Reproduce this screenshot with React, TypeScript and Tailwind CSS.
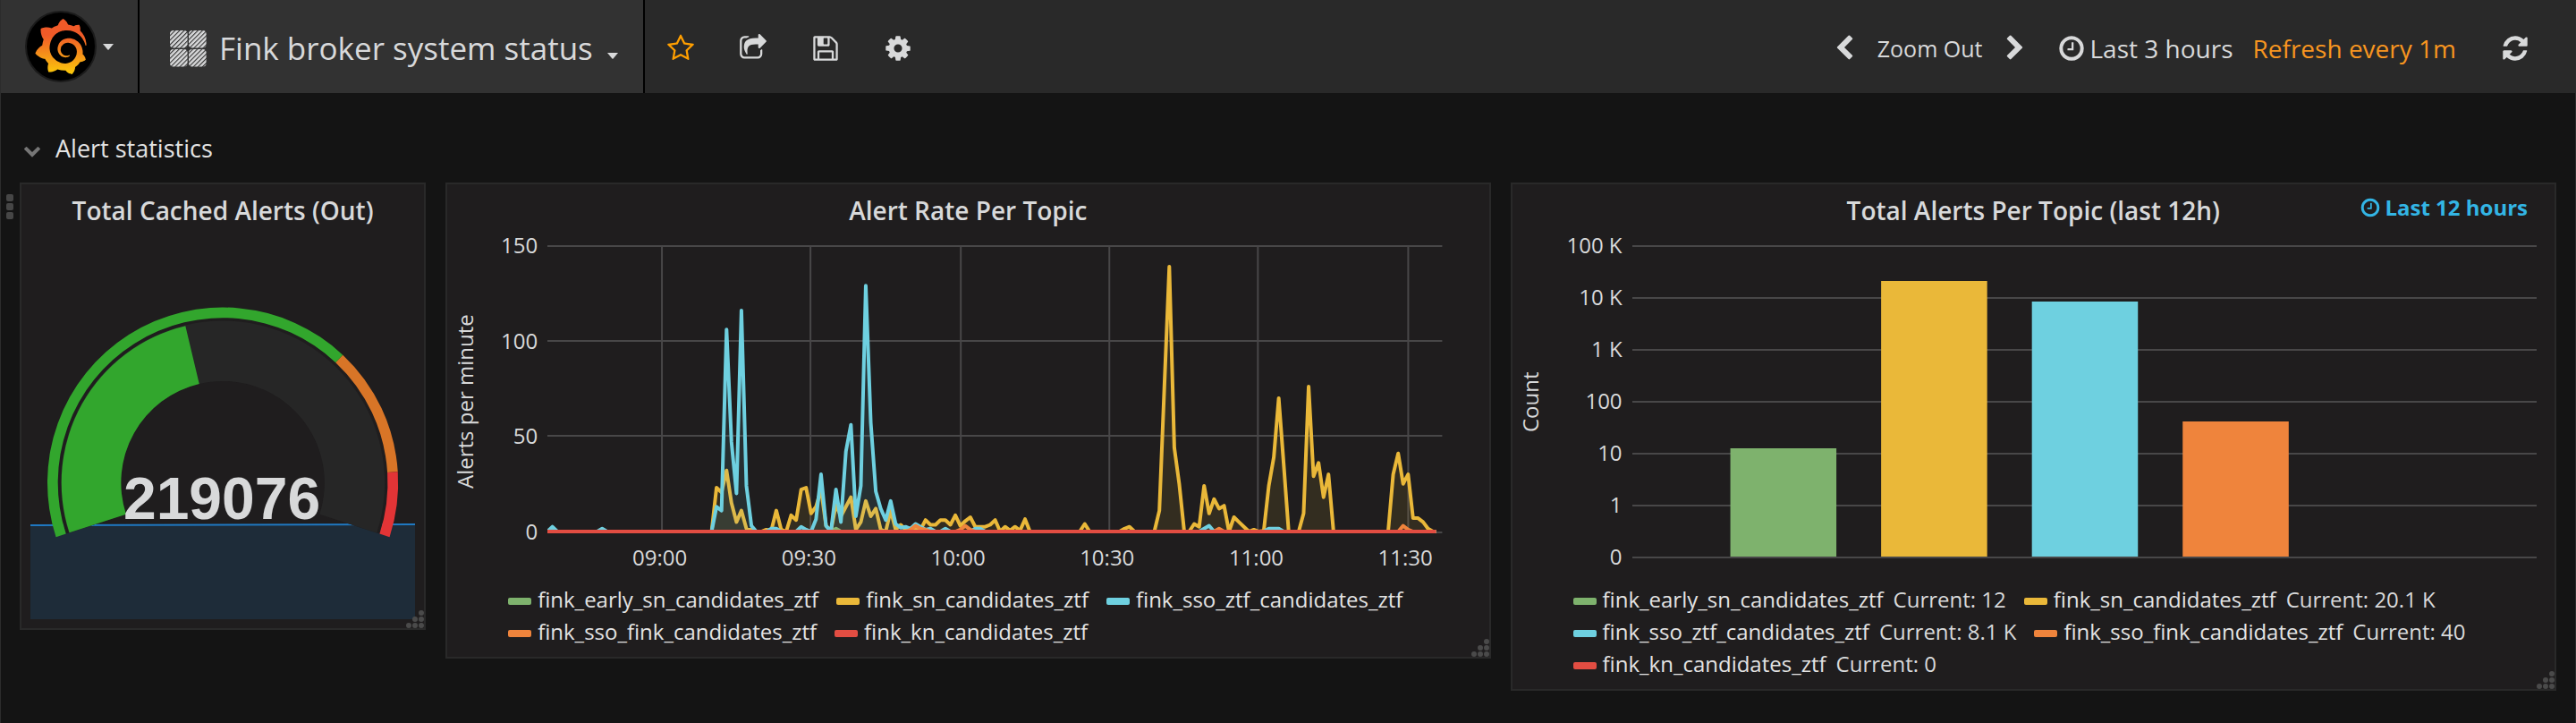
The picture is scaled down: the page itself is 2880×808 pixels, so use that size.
import React from 'react';
import { SiGrafana } from 'react-icons/si';

const COLORS = {
  green: '#7eb26d',
  yellow: '#eab839',
  blue: '#6ed0e0',
  orange: '#ef843c',
  red: '#e24d42',
};

const GLYPHS = {
  star: 'M1201 1004l306-297-422-62-189-382-189 382-422 62 306 297-73 421 378-199 377 199zm527-357q0 22-26 48l-363 354 86 500q1 7 1 20 0 50-41 50-19 0-40-12l-449-236-449 236q-22 12-40 12-21 0-31.5-14.5t-10.5-35.5q0-6 2-20l86-500-364-354q-25-27-25-48 0-37 56-46l502-73 225-455q19-41 49-41t49 41l225 455 502 73q56 9 56 46z',
  share: 'M1472 989v259q0 119-84.5 203.5t-203.5 84.5h-832q-119 0-203.5-84.5t-84.5-203.5v-832q0-119 84.5-203.5t203.5-84.5h255q13 0 22.5 9.5t9.5 22.5q0 27-26 32-77 26-133 60-10 4-16 4h-112q-66 0-113 47t-47 113v832q0 66 47 113t113 47h832q66 0 113-47t47-113v-214q0-19 18-29 28-13 54-37 16-16 35-8 21 9 21 29zm237-496l-384 384q-18 19-45 19-12 0-25-5-39-17-39-59v-192h-160q-323 0-438 131-119 137-74 473 3 23-20 34-8 2-12 2-16 0-26-13-10-14-21-31t-39.5-68.5-49.5-99.5-38.5-114-17.5-122q0-49 3.5-91t14-90 28-88 47-81.5 68.5-74 94.5-61.5 124.5-48.5 159.5-30.5 196.5-11h160v-192q0-42 39-59 13-5 25-5 26 0 45 19l384 384q19 19 19 45t-19 45z',
  save: 'M512 1536h768v-384h-768v384zm896 0h128v-896q0-14-10-38.5t-20-34.5l-281-281q-10-10-34-20t-39-10v416q0 40-28 68t-68 28h-576q-40 0-68-28t-28-68v-416h-128v1280h128v-416q0-40 28-68t68-28h832q40 0 68 28t28 68v416zm-384-928v-320q0-13-9.5-22.5t-22.5-9.5h-192q-13 0-22.5 9.5t-9.5 22.5v320q0 13 9.5 22.5t22.5 9.5h192q13 0 22.5-9.5t9.5-22.5zm640 32v928q0 40-28 68t-68 28h-1344q-40 0-68-28t-28-68v-1344q0-40 28-68t68-28h928q40 0 88 20t76 48l280 280q28 28 48 76t20 88z',
  cog: 'M1152 896q0-106-75-181t-181-75-181 75-75 181 75 181 181 75 181-75 75-181zm512-109v222q0 12-8 23t-20 13l-185 28q-19 54-39 91 35 50 107 138 10 12 10 25t-9 23q-27 37-99 108t-94 71q-12 0-26-9l-138-108q-44 23-91 38-16 136-29 186-7 28-36 28h-222q-14 0-24.5-8.5t-11.5-21.5l-28-184q-49-16-90-37l-141 107q-10 9-25 9-14 0-25-11-126-114-165-168-7-10-7-23 0-12 8-23 15-21 51-66.5t54-70.5q-27-50-41-99l-183-27q-13-2-21-12.5t-8-23.5v-222q0-12 8-23t19-13l186-28q14-46 39-92-40-57-107-138-10-12-10-24 0-10 9-23 26-36 98.5-107.5t94.5-71.5q13 0 26 10l138 107q44-23 91-38 16-136 29-186 7-28 36-28h222q14 0 24.5 8.5t11.5 21.5l28 184q49 16 90 37l142-107q9-9 24-9 13 0 25 10 129 119 165 170 7 8 7 22 0 12-8 23-15 21-51 66.5t-54 70.5q26 50 41 98l183 28q13 2 21 12.5t8 23.5z',
  clock: 'M1024 544v448q0 14-9 23t-23 9h-320q-14 0-23-9t-9-23v-64q0-14 9-23t23-9h224v-352q0-14 9-23t23-9h64q14 0 23 9t9 23zm416 352q0-148-73-273t-198-198-273-73-273 73-198 198-73 273 73 273 198 198 273 73 273-73 198-198 73-273zm224 0q0 209-103 385.5t-279.5 279.5-385.5 103-385.5-103-279.5-279.5-103-385.5 103-385.5 279.5-279.5 385.5-103 385.5 103 279.5 279.5 103 385.5z',
  refresh: 'M1639 1056q0 5-1 7-64 268-268 434.5t-478 166.5q-146 0-282.5-55t-243.5-157l-129 129q-19 19-45 19t-45-19-19-45v-448q0-26 19-45t45-19h448q26 0 45 19t19 45-19 45l-137 137q71 66 161 102t187 36q134 0 250-65t186-179q11-17 53-117 8-23 30-23h192q13 0 22.5 9.5t9.5 22.5zm25-800v448q0 26-19 45t-45 19h-448q-26 0-45-19t-19-45 19-45l138-138q-148-137-349-137-134 0-250 65t-186 179q-11 17-53 117-8 23-30 23h-199q-13 0-22.5-9.5t-9.5-22.5v-7q65-268 270-434.5t480-166.5q146 0 284 55.5t245 156.5l130-129q19-19 45-19t45 19 19 45z',
  left: 'M1427 301l-531 531 531 531q19 19 19 45t-19 45l-166 166q-19 19-45 19t-45-19l-742-742q-19-19-19-45t19-45l742-742q19-19 45-19t45 19l166 166q19 19 19 45t-19 45z',
  right: 'M365 301l531 531-531 531q-19 19-19 45t19 45l166 166q19 19 45 19t45-19l742-742q19-19 19-45t-19-45l-742-742q-19-19-45-19t-45 19l-166 166q-19 19-19 45t19 45z',
  down: 'M1683 808l-742 741q-19 19-45 19t-45-19l-742-741q-19-19-19-45.5t19-45.5l166-165q19-19 45-19t45 19l531 531 531-531q19-19 45-19t45 19l166 165q19 19 19 45.5t-19 45.5z',
};

function Glyph({ name, className }: { name: keyof typeof GLYPHS; className: string }) {
  return (
    <svg viewBox="0 0 1792 1792" fill="currentColor" aria-hidden="true" className={`shrink-0 ${className}`}>
      <path d={GLYPHS[name]} />
    </svg>
  );
}

function Caret() {
  return (
    <svg viewBox="0 0 12 7" fill="currentColor" aria-hidden="true" className="h-[7px] w-3 shrink-0">
      <path d="M0 0h12L6.6 6.6a.9.9 0 0 1-1.2 0z" />
    </svg>
  );
}

function DashboardIcon() {
  const tiles = [
    [0, 0],
    [21, 0],
    [0, 21],
    [21, 21],
  ];
  return (
    <svg viewBox="0 0 41 41" aria-hidden="true" className="size-[41px] shrink-0">
      <defs>
        <pattern id="hatch" width="3.6" height="3.6" patternUnits="userSpaceOnUse" patternTransform="rotate(45)">
          <rect width="3.6" height="3.6" fill="#d8d9da" />
          <rect width="1.1" height="3.6" fill="#323232" />
        </pattern>
      </defs>
      {tiles.map(([x, y]) => (
        <rect key={`${x}-${y}`} x={x} y={y} width="19.6" height="19.6" rx="4" fill="url(#hatch)" />
      ))}
    </svg>
  );
}

function Navbar() {
  return (
    <header className="flex h-[104px] items-stretch bg-[#292929] text-[#d8d9da]">
      <button type="button" aria-label="Main menu" className="flex w-[155px] items-center gap-[7px] border-r-2 border-black bg-[#323232] pl-[27px]">
        <span className="flex size-20 items-center justify-center rounded-full border-2 border-[#1b1b1b] bg-black">
          <svg width="0" height="0" aria-hidden="true" className="absolute">
            <defs>
              <linearGradient id="flame" x1="0" y1="0" x2="0" y2="1">
                <stop offset="0.3" stopColor="#f05a28" />
                <stop offset="1" stopColor="#fbca0a" />
              </linearGradient>
            </defs>
          </svg>
          <SiGrafana size={62} fill="url(#flame)" />
        </span>
        <Caret />
      </button>
      <button type="button" className="flex items-center border-r-2 border-black bg-[#323232] pt-1 pr-7 pl-[34px]">
        <DashboardIcon />
        <span className="ml-[14px] text-[35px] leading-10">Fink broker system status</span>
        <span className="mt-4 ml-4">
          <Caret />
        </span>
      </button>
      <nav aria-label="Dashboard actions" className="flex pt-[3px]">
        <button type="button" aria-label="Mark as favourite" className="flex w-[81px] items-center justify-center text-[#ff9f00]">
          <Glyph name="star" className="size-8" />
        </button>
        <button type="button" aria-label="Share dashboard" className="flex w-[81px] items-center justify-center">
          <Glyph name="share" className="size-8" />
        </button>
        <button type="button" aria-label="Save dashboard" className="flex w-[81px] items-center justify-center">
          <Glyph name="save" className="size-8" />
        </button>
        <button type="button" aria-label="Settings" className="flex w-[81px] items-center justify-center">
          <Glyph name="cog" className="size-8" />
        </button>
      </nav>
      <div className="ml-auto flex items-center pt-1 pr-[51px]">
        <button type="button" aria-label="Shift time back">
          <Glyph name="left" className="size-[30px]" />
        </button>
        <button type="button" className="mx-[22px] text-[25px] leading-9">Zoom Out</button>
        <button type="button" aria-label="Shift time forward">
          <Glyph name="right" className="size-[30px]" />
        </button>
        <button type="button" className="ml-8 flex items-center gap-1 text-[28px] leading-9">
          <Glyph name="clock" className="size-8" />
          Last 3 hours
        </button>
        <button type="button" className="ml-[22px] text-[28px] leading-9 text-[#f79520]">Refresh every 1m</button>
        <button type="button" aria-label="Refresh" className="ml-[50px]">
          <Glyph name="refresh" className="size-8" />
        </button>
      </div>
    </header>
  );
}

function ResizeHandle() {
  const dots = [
    [17, 3],
    [10, 10],
    [17, 10],
    [3, 17],
    [10, 17],
    [17, 17],
  ];
  return (
    <svg viewBox="0 0 20 20" fill="#4a4a4a" aria-hidden="true" className="absolute right-0 bottom-0 size-5">
      {dots.map(([x, y]) => (
        <circle key={`${x}-${y}`} cx={x} cy={y} r="3" />
      ))}
    </svg>
  );
}

function Panel({ title, badge, children }: { title: string; badge?: string; children: React.ReactNode }) {
  return (
    <section className="relative border-2 border-[#292929] bg-[#1f1d1e]">
      <h2 className="flex h-14 items-center justify-center pt-[2px] text-[28px] font-semibold">{title}</h2>
      {badge && (
        <span className="absolute top-[10px] right-[30px] flex items-center gap-1 text-2xl font-bold text-[#33b5e5]">
          <Glyph name="clock" className="size-6" />
          {badge}
        </span>
      )}
      {children}
      <ResizeHandle />
    </section>
  );
}

function polar(radius: number, degrees: number) {
  const a = (degrees * Math.PI) / 180;
  return `${(215 - radius * Math.cos(a)).toFixed(2)} ${(277.5 - radius * Math.sin(a)).toFixed(2)}`;
}

const SWEEP = 216;

function ring(outer: number, inner: number, from: number, to: number) {
  const a = from * SWEEP - 18;
  const b = to * SWEEP - 18;
  const large = b - a > 180 ? 1 : 0;
  return `M${polar(outer, a)}A${outer} ${outer} 0 ${large} 1 ${polar(outer, b)}L${polar(inner, b)}A${inner} ${inner} 0 ${large} 0 ${polar(inner, a)}Z`;
}

function Gauge() {
  return (
    <svg viewBox="0 0 430 430" role="img" aria-label="Gauge at 219076" className="block w-full">
      <path d="M0 325L430 324V430H0Z" fill="#1e2c39" />
      <path d="M0 325L430 324" stroke="#1f78c1" strokeWidth="2" />
      <path d={ring(184.3, 113.7, 0, 1)} fill="#1f1d1e" />
      <path d={ring(181, 113.7, 0, 1)} fill="#262626" />
      <path d={ring(180.3, 113.7, 0, 0.438)} fill="#32a62d" />
      <path d={ring(196, 184.3, 0, 0.7)} fill="#32a62d" />
      <path d={ring(196, 184.3, 0.7, 0.9)} fill="#d87527" />
      <path d={ring(196, 184.3, 0.9, 1)} fill="#e23436" />
      <text x="214" y="318" textAnchor="middle" fill="#d8d9da" className="font-['Liberation_Sans',sans-serif] text-[66px] font-bold">
        219076
      </text>
    </svg>
  );
}

type Runs = [number, number[]][];

const MINUTES = 180;

function expand(runs: Runs) {
  const values = new Array<number>(MINUTES).fill(0);
  runs.forEach(([start, run]) => run.forEach((v, i) => (values[start + i] = v)));
  return values;
}

const SERIES = [
  { color: COLORS.green, values: expand([[58, [1.5]]]) },
  {
    color: COLORS.yellow,
    values: expand([
      [34, [23, 20.5, 32, 15, 5, 11, 1.5, 1]],
      [44, [1, 0.5, 11, 1, 0, 8.5, 6, 22, 23, 9.5, 13, 22, 3, 0.5, 14, 8, 13, 18, 1, 5, 16, 8, 12, 1, 0, 11, 1, 3.5, 1, 1.5, 1, 1, 6, 3.5, 3.5, 6, 6, 3.5, 8.5, 3, 5.5, 7.5, 2.5, 2.5, 2.5, 3.5, 6, 0, 2.5, 0.5, 2.5, 0.5, 6.5]],
      [108, [4]],
      [116, [1.5, 2.5]],
      [123, [11, 75, 139, 44, 25, 0, 0, 4, 2.5, 24, 9.5, 17, 12, 13.5, 0, 7.5, 5, 2.5, 0, 1, 0, 0.5, 24, 39, 70, 35, 0, 0, 0, 9.5, 76, 29, 36, 18, 30]],
      [170, [30, 41, 25, 30, 7, 7, 5, 1.5]],
    ]),
  },
  {
    color: COLORS.blue,
    values: expand([
      [1, [2.5]],
      [11, [1.5]],
      [34, [13, 11, 106, 47, 20, 116, 24, 3]],
      [45, [1.5, 1.5]],
      [51, [2.5, 1, 0, 6.5, 30, 3, 0, 22, 5, 42, 56, 8, 24, 129, 57, 21, 12, 6, 16, 4, 2, 2.5, 1.5, 4, 2.5, 1, 1.5]],
      [80, [1.5]],
      [86, [1.5, 1.5]],
      [132, [1.5, 3]],
      [145, [1.5, 1.5, 1.5]],
    ]),
  },
  {
    color: COLORS.orange,
    values: expand([
      [73, [1, 3, 1.5, 1]],
      [83, [1, 3, 1]],
      [135, [1.5]],
      [172, [3, 1]],
    ]),
  },
  { color: COLORS.red, values: expand([]) },
];

function line(values: number[]) {
  return values.map((v, i) => `${i ? 'L' : 'M'}${Math.min(i * 5.56, 993).toFixed(1)} ${(321 - v * 2.13).toFixed(1)}`).join('');
}

function RatePlot() {
  return (
    <svg viewBox="0 0 1000 324" preserveAspectRatio="none" role="img" aria-label="Alerts per minute by topic" className="mt-[11px] block h-[324px] w-full">
      <g stroke="#484748" strokeWidth="2" fill="none">
        {[2, 108, 214, 322].map((y) => (
          <path key={y} d={`M0 ${y}H1000`} />
        ))}
        {[128, 294, 462, 628, 794, 962].map((x) => (
          <path key={x} d={`M${x} 1V322`} />
        ))}
      </g>
      {SERIES.map((s) => (
        <g key={s.color}>
          <path d={`${line(s.values)}V321H0Z`} fill={s.color} fillOpacity="0.1" />
          <path d={line(s.values)} fill="none" stroke={s.color} strokeWidth="4" strokeLinejoin="round" vectorEffect="non-scaling-stroke" />
        </g>
      ))}
    </svg>
  );
}

const BARS = [
  { x: 109.5, y: 228, color: COLORS.green },
  { x: 278, y: 41, color: COLORS.yellow },
  { x: 446.5, y: 64, color: COLORS.blue },
  { x: 615, y: 198, color: COLORS.orange },
];

function CountPlot() {
  return (
    <svg viewBox="0 0 1011 352" preserveAspectRatio="none" role="img" aria-label="Total alerts by topic" className="mt-[11px] block h-[352px] w-full">
      {[2, 60, 118, 176, 234, 292, 350].map((y) => (
        <path key={y} d={`M0 ${y}H1011`} stroke="#484748" strokeWidth="2" />
      ))}
      {BARS.map((b) => (
        <rect key={b.color} x={b.x} y={b.y} width="118.5" height={349 - b.y} fill={b.color} />
      ))}
    </svg>
  );
}

function AxisTitle({ children }: { children: string }) {
  return <div className="flex w-6 shrink-0 rotate-180 items-center justify-center text-2xl leading-6 [writing-mode:vertical-rl]">{children}</div>;
}

function Ticks({ labels, className }: { labels: string[]; className: string }) {
  return (
    <div className={`mr-[11px] flex shrink-0 flex-col justify-between text-right text-2xl leading-6 ${className}`}>
      {labels.map((label) => (
        <span key={label}>{label}</span>
      ))}
    </div>
  );
}

interface LegendItem {
  name: string;
  color: string;
  current?: string;
}

function Legend({ items }: { items: LegendItem[] }) {
  return (
    <ul className="flex flex-wrap gap-x-5 pt-4 pr-5 pb-[10px] pl-[68px] text-2xl leading-9">
      {items.map((item) => (
        <li key={item.name} className="flex items-center gap-[7px]">
          <svg viewBox="0 0 26 8" aria-hidden="true" className="mt-1 h-2 w-[26px]">
            <rect width="26" height="8" rx="2" fill={item.color} />
          </svg>
          <span className="text-[#e3e3e3]">{item.name}</span>
          {item.current && <span className="ml-1">Current: {item.current}</span>}
        </li>
      ))}
    </ul>
  );
}

const RATE_LEGEND: LegendItem[] = [
  { name: 'fink_early_sn_candidates_ztf', color: COLORS.green },
  { name: 'fink_sn_candidates_ztf', color: COLORS.yellow },
  { name: 'fink_sso_ztf_candidates_ztf', color: COLORS.blue },
  { name: 'fink_sso_fink_candidates_ztf', color: COLORS.orange },
  { name: 'fink_kn_candidates_ztf', color: COLORS.red },
];

const CURRENT = ['12', '20.1 K', '8.1 K', '40', '0'];
const COUNT_LEGEND = RATE_LEGEND.map((item, i) => ({ ...item, current: CURRENT[i] }));

export default function App() {
  return (
    <div className="min-h-screen border-x border-[#2c2c2c] bg-[#141414] font-['Open_Sans',sans-serif] text-[#d8d9da]">
      <Navbar />
      <main className="px-[21px] pt-11 pb-9">
        <button type="button" className="flex items-center gap-4 pl-1 text-[27px] leading-9 text-[#e3e3e3]">
          <Glyph name="down" className="mt-1 size-5 text-[#767676]" />
          Alert statistics
        </button>
        <div className="relative mt-5 grid grid-cols-[454fr_1168fr_1169fr] items-start gap-[22px]">
          <div aria-hidden="true" className="absolute top-[13px] -left-[15px] flex flex-col gap-[2px]">
            <span className="size-2 rounded-xs bg-[#464646]" />
            <span className="size-2 rounded-xs bg-[#464646]" />
            <span className="size-2 rounded-xs bg-[#464646]" />
          </div>
          <Panel title="Total Cached Alerts (Out)">
            <div className="px-[10px] pb-[10px]">
              <Gauge />
            </div>
          </Panel>
          <Panel title="Alert Rate Per Topic">
            <div className="flex min-h-[374px] pr-[52px] pl-2">
              <AxisTitle>Alerts per minute</AxisTitle>
              <Ticks labels={['150', '100', '50', '0']} className="h-[344px] w-[69px]" />
              <div className="min-w-0 flex-1">
                <RatePlot />
                <div className="mt-[14px] flex text-center text-2xl leading-6">
                  <span className="w-[4.2%] shrink-0" />
                  {['09:00', '09:30', '10:00', '10:30', '11:00', '11:30'].map((label) => (
                    <span key={label} className="w-1/6 shrink-0">
                      {label}
                    </span>
                  ))}
                </div>
              </div>
            </div>
            <Legend items={RATE_LEGEND} />
          </Panel>
          <Panel title="Total Alerts Per Topic (last 12h)" badge="Last 12 hours">
            <div className="flex min-h-[374px] pr-5 pl-2">
              <AxisTitle>Count</AxisTitle>
              <Ticks labels={['100 K', '10 K', '1 K', '100', '10', '1', '0']} className="h-[372px] w-[91px]" />
              <div className="min-w-0 flex-1">
                <CountPlot />
              </div>
            </div>
            <Legend items={COUNT_LEGEND} />
          </Panel>
        </div>
      </main>
    </div>
  );
}
